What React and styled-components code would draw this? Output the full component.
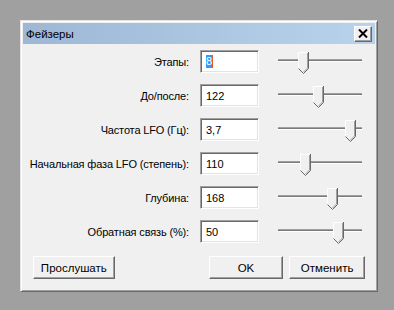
import React from "react";
import styled, { createGlobalStyle } from "styled-components";

const GlobalStyle = createGlobalStyle`
  html, body {
    margin: 0;
    padding: 0;
    background: #a0a0a0;
    font-family: "Liberation Sans", Arial, sans-serif;
  }
`;

const Page = styled.div`
  width: 394px;
  height: 310px;
  padding: 20px 0 0 20px;
  box-sizing: border-box;
`;

const Dialog = styled.div`
  width: 358px;
  height: 272px;
  box-sizing: border-box;
  background: #f0f0f0;
  border: 1px solid;
  border-color: #e3e3e3 #696969 #696969 #e3e3e3;
  box-shadow: inset 1px 1px 0 #ffffff, inset -1px -1px 0 #a0a0a0;
  padding: 2px;
  display: flex;
  flex-direction: column;
`;

const TitleBar = styled.div`
  height: 21px;
  display: flex;
  align-items: center;
  justify-content: space-between;
  padding: 0 3px 0 3px;
  background: linear-gradient(to right, #9db7d5, #bad3ec);
`;

const Title = styled.span`
  font-size: 11.5px;
  color: #000;
`;

const CloseButton = styled.div`
  width: 18px;
  height: 16px;
  box-sizing: border-box;
  background: #f0f0f0;
  border: 1px solid;
  border-color: #ffffff #696969 #696969 #ffffff;
  box-shadow: inset -1px -1px 0 #a0a0a0;
  display: flex;
  align-items: center;
  justify-content: center;
`;

const Body = styled.div`
  display: flex;
  flex-direction: column;
  padding-top: 6px;
`;

const Rows = styled.div`
  display: flex;
  flex-direction: column;
  gap: 11px;
`;

const Row = styled.div`
  display: flex;
  align-items: center;
  height: 23px;
`;

const Label = styled.div`
  width: 166px;
  text-align: right;
  font-size: 11px;
  letter-spacing: -0.15px;
  color: #000;
  white-space: nowrap;
`;

const Field = styled.div`
  margin-left: 11px;
  width: 59px;
  height: 23px;
  box-sizing: border-box;
  background: #fff;
  border: 1px solid;
  border-color: #a0a0a0 #ffffff #ffffff #a0a0a0;
  box-shadow: inset 1px 1px 0 #696969, inset -1px -1px 0 #e3e3e3;
  font-size: 11px;
  color: #000;
  display: flex;
  align-items: center;
  padding-left: 5px;
`;

const Selected = styled.span`
  background: #3399ff;
  color: #fff;
  border-right: 1px solid #e05a1e;
  line-height: 13px;
`;

const Slider = styled.div`
  position: relative;
  margin-left: 19px;
  width: 84px;
  height: 23px;
`;

const Track = styled.div`
  position: absolute;
  left: 0;
  right: 0;
  top: 9px;
  height: 3px;
  box-sizing: border-box;
  background: #7a7a7a;
  border-top: 1px solid #a0a0a0;
  border-bottom: 1px solid #ffffff;
`;

const Thumb = styled.svg`
  position: absolute;
  top: 2px;
`;

const Buttons = styled.div`
  display: flex;
  align-items: center;
  margin-top: 13px;
  padding: 0 10px;
`;

const Button = styled.div`
  width: ${(p) => p.w}px;
  height: 23px;
  margin-left: ${(p) => p.ml || 0}px;
  box-sizing: border-box;
  background: #f0f0f0;
  border: 1px solid;
  border-color: #ffffff #696969 #696969 #ffffff;
  box-shadow: inset -1px -1px 0 #a0a0a0;
  display: flex;
  align-items: center;
  justify-content: center;
  font-size: 11.5px;
  color: #000;
`;

const rows = [
  { label: "Этапы:", value: "8", pos: 20, selected: true },
  { label: "До/после:", value: "122", pos: 35 },
  { label: "Частота LFO (Гц):", value: "3,7", pos: 67 },
  { label: "Начальная фаза LFO (степень):", value: "110", pos: 22 },
  { label: "Глубина:", value: "168", pos: 49 },
  { label: "Обратная связь (%):", value: "50", pos: 55 },
];

const SliderThumb = ({ pos }) => (
  <Thumb width="11" height="22" viewBox="0 0 11 22" style={{ left: pos }}>
    <path d="M0.5 0.5 H10.5 V16.5 L5.5 21.5 L0.5 16.5 Z" fill="#f0f0f0" />
    <path d="M0.5 16.5 V0.5 H10" fill="none" stroke="#ffffff" />
    <path d="M9.5 1 V16 L5.5 20" fill="none" stroke="#a0a0a0" />
    <path d="M10.5 0 V16.5 L5.5 21.5 L0.5 16.5" fill="none" stroke="#696969" />
  </Thumb>
);

const App = () => {
  return (
    <Page>
      <GlobalStyle />
      <Dialog>
        <TitleBar>
          <Title>Фейзеры</Title>
          <CloseButton>
            <svg width="10" height="9" viewBox="0 0 10 9">
              <path d="M1 0.5 L9 8.5 M9 0.5 L1 8.5" stroke="#000" strokeWidth="2" />
            </svg>
          </CloseButton>
        </TitleBar>
        <Body>
          <Rows>
            {rows.map((r, i) => (
              <Row key={`row_${i}`}>
                <Label>{r.label}</Label>
                <Field>{r.selected ? <Selected>{r.value}</Selected> : r.value}</Field>
                <Slider>
                  <Track />
                  <SliderThumb pos={r.pos} />
                </Slider>
              </Row>
            ))}
          </Rows>
          <Buttons>
            <Button w={82}>Прослушать</Button>
            <Button w={75} ml={94}>OK</Button>
            <Button w={76} ml={6}>Отменить</Button>
          </Buttons>
        </Body>
      </Dialog>
    </Page>
  );
};

export default App;
